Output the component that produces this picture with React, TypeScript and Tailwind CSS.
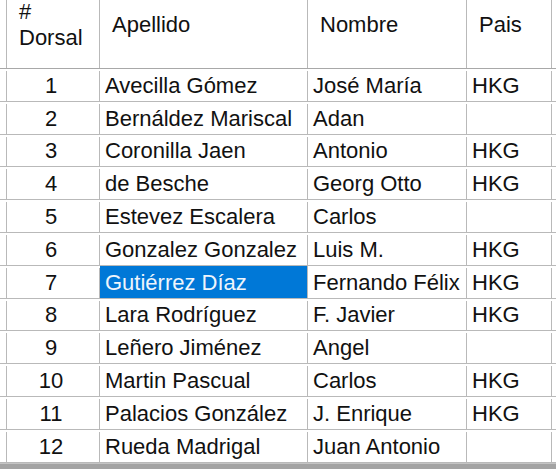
import React from 'react';

type Row = { dorsal: number; apellido: string; nombre: string; pais: string };

const rows: Row[] = [
  { dorsal: 1, apellido: 'Avecilla Gómez', nombre: 'José María', pais: 'HKG' },
  { dorsal: 2, apellido: 'Bernáldez Mariscal', nombre: 'Adan', pais: '' },
  { dorsal: 3, apellido: 'Coronilla Jaen', nombre: 'Antonio', pais: 'HKG' },
  { dorsal: 4, apellido: 'de Besche', nombre: 'Georg Otto', pais: 'HKG' },
  { dorsal: 5, apellido: 'Estevez Escalera', nombre: 'Carlos', pais: '' },
  { dorsal: 6, apellido: 'Gonzalez Gonzalez', nombre: 'Luis M.', pais: 'HKG' },
  { dorsal: 7, apellido: 'Gutiérrez Díaz', nombre: 'Fernando Félix', pais: 'HKG' },
  { dorsal: 8, apellido: 'Lara Rodríguez', nombre: 'F. Javier', pais: 'HKG' },
  { dorsal: 9, apellido: 'Leñero Jiménez', nombre: 'Angel', pais: '' },
  { dorsal: 10, apellido: 'Martin Pascual', nombre: 'Carlos', pais: 'HKG' },
  { dorsal: 11, apellido: 'Palacios González', nombre: 'J. Enrique', pais: 'HKG' },
  { dorsal: 12, apellido: 'Rueda Madrigal', nombre: 'Juan Antonio', pais: '' },
];

const grid = 'grid grid-cols-[7px_93px_208px_159px_85px]';
const cell = 'border-r border-[#b9b9b9]';

export default function App() {
  return (
    <div
      className="flex flex-col w-[556px] h-[469px] bg-white text-[#111] text-[22px] overflow-hidden"
      style={{ fontFamily: '"Liberation Sans", Arial, sans-serif' }}
    >
      {/* header */}
      <div className={`${grid} h-[69px] shrink-0 border-b border-[#a8a8a8] leading-[26px]`}>
        <div className={cell} />
        <div className={`${cell} pl-3 overflow-hidden`}>
          <div className="-mt-[1px]">#</div>
          <div>Dorsal</div>
        </div>
        <div className={`${cell} pl-3 pt-[12px]`}>Apellido</div>
        <div className={`${cell} pl-3 pt-[12px]`}>Nombre</div>
        <div className={`${cell} pl-3 pt-[12px]`}>Pais</div>
      </div>

      {rows.map((r) => {
        const selected = r.dorsal === 7;
        return (
          <div
            key={r.dorsal}
            className={`${grid} h-[32.8px] shrink-0 border-b border-[#b9b9b9] leading-none pt-[2px]`}
          >
            <div className={cell} />
            <div className={`${cell} flex items-center justify-center pr-1`}>{r.dorsal}</div>
            <div
              className={`${cell} flex items-center pl-[5px] whitespace-nowrap ${
                selected ? 'bg-[#0078d7] text-[#eef5fc] -mt-[2px] pt-[2px]' : ''
              }`}
            >
              {r.apellido}
            </div>
            <div className={`${cell} flex items-center pl-[5px] whitespace-nowrap`}>{r.nombre}</div>
            <div className={`${cell} flex items-center pl-[5px]`}>{r.pais}</div>
          </div>
        );
      })}

      <div className="flex-1 bg-[#a3a3a3] border-t border-[#c4c4c4]" />
    </div>
  );
}
